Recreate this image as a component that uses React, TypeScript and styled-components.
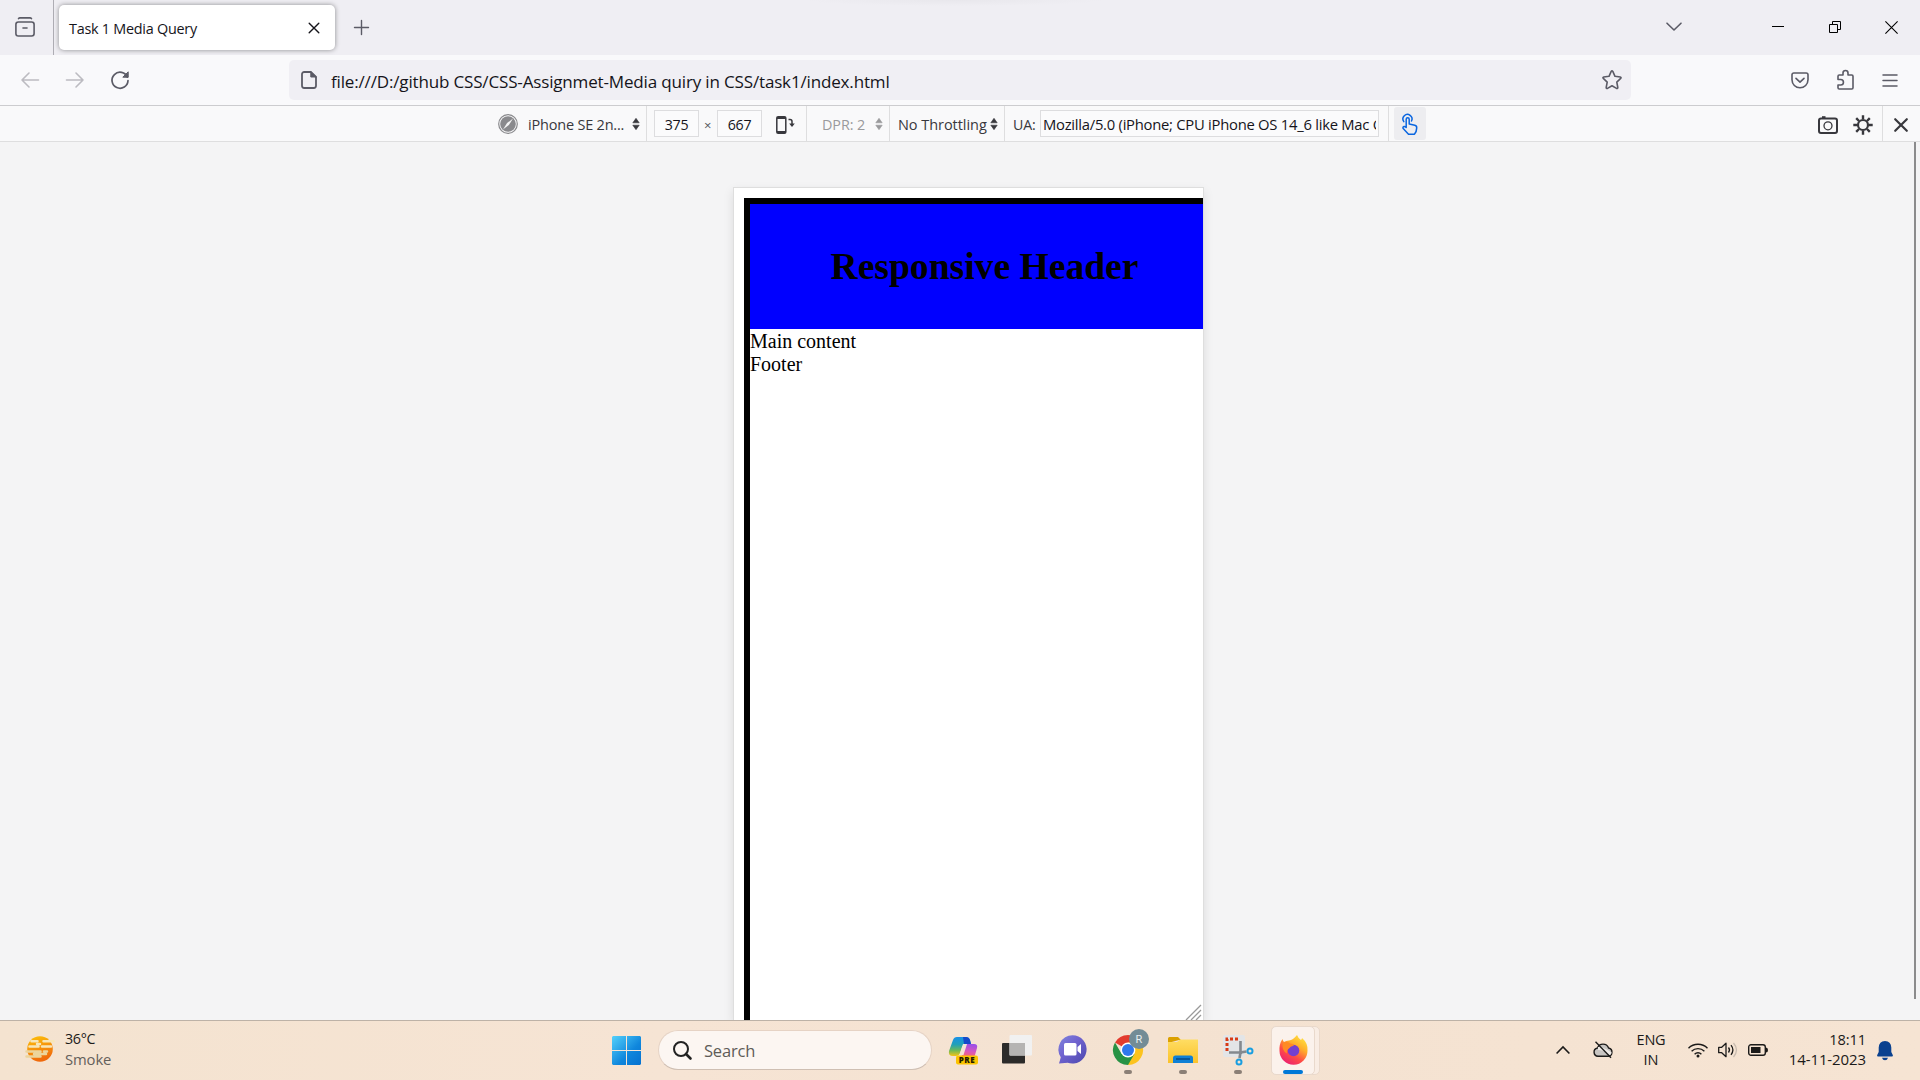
import React from "react";
import styled, { createGlobalStyle } from "styled-components";

const Global = createGlobalStyle`
  * { box-sizing: border-box; }
  html, body, #root { margin: 0; width: 1920px; height: 1080px; overflow: hidden; }
  body { font-family: "Open Sans", "Noto Sans", sans-serif; color: #15141a; }
  svg { display: block; flex: none; overflow: visible; }
`;

const Screen = styled.div`
  width: 1920px;
  height: 1080px;
  display: flex;
  flex-direction: column;
  background: #f4f4f5;
`;
const Label = styled.span<{ $size: number; $track?: number; $color?: string; $ml?: number; $w?: number; $drop?: number }>`
  font-size: ${(p) => p.$size}px;
  letter-spacing: ${(p) => p.$track ?? 0}px;
  color: ${(p) => p.$color ?? "#15141a"};
  margin-left: ${(p) => p.$ml ?? 0}px;
  padding-top: ${(p) => p.$drop ?? 0}px;
  width: ${(p) => (p.$w ? p.$w + "px" : "auto")};
  white-space: pre;
  flex: none;
`;
const Space = styled.div<{ $w?: number }>`
  flex: ${(p) => (p.$w === undefined ? "1" : `0 0 ${p.$w}px`)};
`;

const TabStrip = styled.header`
  height: 55px;
  flex: none;
  display: flex;
  align-items: center;
  background: radial-gradient(150px 6px at 955px 0, #e8e7ec, transparent), #efeef3;
`;
const FirefoxView = styled.div`
  width: 54px;
  height: 55px;
  border-right: 1px solid #aeadb4;
  padding: 17px 0 0 15px;
`;
const Tab = styled.div`
  width: 276px;
  height: 45px;
  margin: 0 19px 0 5px;
  padding: 0 15px 0 10px;
  display: flex;
  align-items: center;
  justify-content: space-between;
  background: #fff;
  border-radius: 5px;
  box-shadow: 0 0 5px rgba(0, 0, 0, 0.42);
`;
const WindowControls = styled.div`
  display: flex;
  align-items: center;
  padding: 0 22px 1px 0;
`;

const NavBar = styled.nav`
  height: 51px;
  flex: none;
  display: flex;
  align-items: center;
  background: #f9f9fb;
  border-bottom: 1px solid #cccccf;
  padding-left: 21px;
`;
const UrlBar = styled.div`
  width: 1342px;
  height: 40px;
  display: flex;
  align-items: center;
  padding: 0 9px 0 12px;
  background: #f0eff4;
  border-radius: 5px;
`;

const DeviceBar = styled.div`
  height: 36px;
  flex: none;
  display: flex;
  align-items: center;
  background: #f9f9fa;
  border-bottom: 1px solid #dededf;
  padding-left: 498px;
`;
const BarIcon = styled.svg`
  margin-top: 3px;
`;
const Divider = styled.div`
  width: 1px;
  height: 35px;
  flex: none;
  background: #dededf;
`;
const Field = styled.div<{ $w: number; $center?: boolean }>`
  width: ${(p) => p.$w}px;
  height: 27px;
  flex: none;
  display: flex;
  align-items: center;
  justify-content: ${(p) => (p.$center ? "center" : "flex-start")};
  padding: 0 2px;
  border: 1px solid #dddddf;
  background: #fbfbfc;
`;
const Clip = styled.div`
  overflow: hidden;
  display: flex;
  flex: 1;
`;
const TouchButton = styled.div`
  width: 32px;
  height: 33px;
  margin-left: 5px;
  padding-top: 2px;
  display: grid;
  place-items: center;
  border-radius: 3px;
  background: #ededf0;
`;

const Stage = styled.main`
  height: 878px;
  flex: none;
  display: flex;
  align-items: stretch;
  padding: 45px 4px 0 733px;
  overflow: hidden;
`;
const Viewport = styled.section`
  position: relative;
  width: 471px;
  border: 1px solid #dedede;
  border-bottom: 0;
  background: #fff;
  box-shadow: 0 4px 10px rgba(0, 0, 0, 0.1);
  padding: 10px 0 0 10px;
`;
const PageBody = styled.div`
  height: 823px;
  border: solid #000;
  border-width: 6px 0 0 6px;
  font-family: "Liberation Serif", serif;
  font-size: 20px;
  line-height: 23px;
  color: #000;
`;
const PageHeader = styled.div`
  height: 125px;
  background: #00f;
  padding: 0 0 0 16px;
  display: flex;
  align-items: center;
  justify-content: center;
  margin-bottom: 1px;
`;
const Title = styled.h1`
  margin: 0;
  font-size: 37.6px;
  line-height: 46px;
  font-weight: 700;
  white-space: nowrap;
`;
const Grip = styled.svg`
  position: absolute;
  right: 2px;
  bottom: 0;
`;
const ScrollThumb = styled.div`
  width: 2px;
  height: 857px;
  margin: -45px 0 0 auto;
  background: #8b8b8c;
`;

const Taskbar = styled.footer`
  height: 60px;
  flex: none;
  display: flex;
  align-items: center;
  border-top: 1px solid #bdb2a7;
  background: linear-gradient(90deg, #f4e3d0, #f6e4d4 35%, #f4e2d1 60%, #f6e4d3);
  padding-left: 25px;
`;
const Stack = styled.div<{ $ml: number; $align?: string; $w?: number; $lift?: number }>`
  margin-left: ${(p) => p.$ml}px;
  padding-bottom: ${(p) => p.$lift ?? 2}px;
  width: ${(p) => (p.$w ? p.$w + "px" : "auto")};
  display: flex;
  flex-direction: column;
  align-items: ${(p) => p.$align ?? "flex-start"};
  line-height: 20px;
`;
const SearchBox = styled.div`
  width: 274px;
  height: 40px;
  margin: 0 0 1px 17px;
  padding-left: 14px;
  display: flex;
  align-items: center;
  border: 1px solid #e6d3c5;
  border-bottom-color: #cfbfb3;
  border-radius: 20px;
  background: #fcf6f2;
`;
const AppSlot = styled.div<{ $w?: number }>`
  width: ${(p) => p.$w ?? 55}px;
  height: 59px;
  flex: none;
  display: flex;
  flex-direction: column;
  align-items: center;
  justify-content: flex-end;
  gap: 5px;
  padding-bottom: 6px;
`;
const Running = styled.div<{ $on?: boolean }>`
  width: 8px;
  height: 4px;
  border-radius: 2px;
  background: ${(p) => (p.$on ? "#8b7f76" : "transparent")};
`;
const ActiveGroup = styled.div`
  width: 49px;
  height: 49px;
  border-radius: 5px;
  background: #f9ede4;
  border: 1px solid #ead9cb;
  margin-left: 7px;
`;
const ActiveApp = styled.div`
  width: 44px;
  height: 49px;
  margin: -1px 0 0 -1px;
  padding-top: 8px;
  display: flex;
  flex-direction: column;
  align-items: center;
  justify-content: space-between;
  border-radius: 5px;
  background: #fbf2ec;
  border: 1px solid #e9d9cc;
`;
const ActiveMark = styled.div`
  width: 20px;
  height: 4px;
  border-radius: 2px;
  background: #0078d7;
`;

const line = { fill: "none", stroke: "#5b5b66", strokeWidth: 1.6, strokeLinecap: "round", strokeLinejoin: "round" } as const;

const Sorter = ({ color = "#38383d" }: { color?: string }) => (
  <svg width="8" height="12" viewBox="0 0 8 12" fill={color}>
    <path d="M4 .3 7.2 4.8H.8zM4 11.7.8 7.2h6.4z" stroke={color} strokeWidth=".6" strokeLinejoin="round" />
  </svg>
);

function Tabs() {
  return (
    <TabStrip>
      <FirefoxView>
        <svg width="20" height="20" viewBox="0 0 20 20" {...line}>
          <path d="M3.500 1.600Q4 .9 5 .9h10q1 0 1.500.7" />
          <rect x=".9" y="5" width="18.200" height="14" rx="2.500" />
          <path d="M8 11h4" />
        </svg>
      </FirefoxView>
      <Tab>
        <Label $size={14.4} $track={-0.25} $drop={1}>Task 1 Media Query</Label>
        <svg width="12" height="12" viewBox="0 0 12 12" {...line} stroke="#15141a" strokeWidth="1.400">
          <path d="M1.200 1.200l9.600 9.600M10.800 1.200l-9.600 9.600" />
        </svg>
      </Tab>
      <svg width="15" height="15" viewBox="0 0 15 15" {...line} strokeWidth="1.400">
        <path d="M7.500.5v14M.5 7.500h14" />
      </svg>
      <Space />
      <WindowControls>
        <svg width="16" height="10" viewBox="0 0 16 10" {...line}>
          <path d="M1 1.200 8 8l7-6.800" />
        </svg>
        <Space $w={90} />
        <svg width="12" height="12" viewBox="0 0 12 12" stroke="#000" fill="none">
          <path d="M0 5.500h12" />
        </svg>
        <Space $w={45} />
        <svg width="12" height="12" viewBox="0 0 12 12" stroke="#000" fill="none">
          <path d="M.5 3.500h8v8h-8zM3.500 3.500v-3h8v8h-3" />
        </svg>
        <Space $w={44} />
        <svg width="13" height="13" viewBox="0 0 13 13" stroke="#000" fill="none" strokeWidth="1.100">
          <path d="M.4.4l12.200 12.200M12.600.4.4 12.600" />
        </svg>
      </WindowControls>
    </TabStrip>
  );
}

function Navigation() {
  return (
    <NavBar>
      <svg width="18" height="16" viewBox="0 0 18 16" {...line} stroke="#bcbbc1">
        <path d="M8 1 1 8l7 7M1 8h16.500" />
      </svg>
      <Space $w={27} />
      <svg width="18" height="16" viewBox="0 0 18 16" {...line} stroke="#bcbbc1">
        <path d="M10 1l7 7-7 7M17 8H.5" />
      </svg>
      <Space $w={27} />
      <svg width="18" height="18" viewBox="0 0 18 18" {...line} strokeWidth="1.700">
        <path d="M16.400 6.200A8 8 0 1 0 17 9.500" />
        <path d="M17.200 1.200v5h-5z" fill="#5b5b66" strokeWidth="1" />
      </svg>
      <Space $w={160} />
      <UrlBar>
        <svg width="16" height="18" viewBox="0 0 16 18" {...line} strokeWidth="1.800">
          <path d="M3.200 1h6.600l5.200 5v8.800a2.200 2.200 0 0 1-2.200 2.200H3.200A2.200 2.200 0 0 1 1 14.800V3.200A2.200 2.200 0 0 1 3.200 1z" />
          <path d="M9.800 1v5H15z" fill="#5b5b66" strokeWidth="1" />
        </svg>
        <Label $size={17.05} $track={-0.17} $ml={14} $drop={2}>file:///D:/github CSS/CSS-Assignmet-Media quiry in CSS/task1/index.html</Label>
        <Space />
        <svg width="20" height="20" viewBox="0 0 20 20" {...line} strokeWidth="1.600">
          <path d="M9.200 1.400q.8-1.200 1.600 0l2.200 4.900 5.300.7q1.300.3.400 1.400l-3.900 3.700 1 5.400q0 1.400-1.300.9L10 15.800l-4.500 2.600q-1.300.5-1.300-.9l1-5.400L1.300 8.400Q.4 7.300 1.700 7L7 6.300z" />
        </svg>
      </UrlBar>
      <Space />
      <svg width="18" height="17" viewBox="0 0 18 17" {...line}>
        <path d="M2.800 1h12.400A1.800 1.800 0 0 1 17 2.800v5a8 8 0 0 1-16 0v-5A1.800 1.800 0 0 1 2.800 1z" />
        <path d="M5 6.400l4 3.800 4-3.800" />
      </svg>
      <Space $w={28} />
      <svg width="17" height="20" viewBox="0 0 17 20" {...line}>
        <path d="M1 9V6.200q0-1.200 1.200-1.200H6V3a2.500 2.500 0 0 1 5 0v2h3.800Q16 5 16 6.200v11.600q0 1.200-1.200 1.200H2.200Q1 19 1 17.800V15h2.700a2.600 2.600 0 0 0 0-5.500H1z" />
      </svg>
      <Space $w={28} />
      <svg width="16" height="13" viewBox="0 0 16 13" {...line} strokeWidth="1.500">
        <path d="M1 1h14M1 6.500h14M1 12h14" />
      </svg>
      <Space $w={22} />
    </NavBar>
  );
}

function DeviceToolbar() {
  return (
    <DeviceBar>
      <svg width="20" height="20" viewBox="0 0 20 20">
        <circle cx="10" cy="10" r="9.300" fill="#f9f9fa" stroke="#8a8a8d" strokeWidth="1.200" />
        <circle cx="10" cy="10" r="7.800" fill="#8a8a8d" />
        <path d="M15 4.500 10.900 10.900 5 15.500 9.100 9.100z" fill="#f4f4f4" />
      </svg>
      <Label $size={14.5} $track={-0.2} $ml={10} $w={104} $drop={2} $color="#38383d">iPhone SE 2n...</Label>
      <Sorter />
      <Space $w={6} />
      <Divider />
      <Space $w={7} />
      <Field $w={45} $center><Label $size={14.2} $track={-0.2} $drop={2}>375</Label></Field>
      <Label $size={13} $ml={5} $w={13} $drop={2} $color="#55555a">×</Label>
      <Field $w={45} $center><Label $size={14.2} $track={-0.2} $drop={2}>667</Label></Field>
      <Space $w={14} />
      <BarIcon width="19" height="18" viewBox="0 0 19 18" fill="none" stroke="#38383d" strokeWidth="1.500">
        <rect x=".8" y=".8" width="9" height="16.400" rx="1.300" />
        <path d="M1 2h9M1 16h9" strokeWidth="2" />
        <path d="M12.500 3.500h1.500q2 0 2 2V9" />
        <path d="M13.200 7.500h5.600L16 11z" fill="#38383d" stroke="none" />
      </BarIcon>
      <Space $w={11} />
      <Divider />
      <Label $size={14.4} $track={-0.1} $ml={15} $w={53} $drop={1} $color="#9a9a9c">DPR: 2</Label>
      <Sorter color="#9a9a9c" />
      <Space $w={6} />
      <Divider />
      <Label $size={14.5} $track={-0.05} $ml={8} $w={92} $drop={1} $color="#38383d">No Throttling</Label>
      <Sorter />
      <Space $w={6} />
      <Divider />
      <Label $size={14.2} $track={-0.2} $ml={8} $w={27} $drop={2} $color="#38383d">UA:</Label>
      <Field $w={339}>
        <Clip><Label $size={14.8} $track={-0.26} $drop={1}>Mozilla/5.0 (iPhone; CPU iPhone OS 14_6 like Mac O</Label></Clip>
      </Field>
      <Space $w={9} />
      <Divider />
      <TouchButton>
        <svg width="18" height="21" viewBox="0 0 18 21" fill="none" stroke="#0a66e0" strokeWidth="1.500" strokeLinecap="round" strokeLinejoin="round">
          <path d="M2.800 7.600A4.500 4.500 0 1 1 10.500 7" />
          <path d="M5.200 13.500V5.300a1.500 1.500 0 0 1 3 0V10l5.600 1.200q2.200.5 1.900 2.800l-.6 3.500-1.600 2.700H7.500L2.200 14.600q-.8-1.600.8-2.100 1-.2 2.200 1z" />
        </svg>
      </TouchButton>
      <Space />
      <BarIcon width="20" height="18" viewBox="0 0 20 18" fill="none" stroke="#38383d" strokeWidth="2">
        <rect x="1" y="2.500" width="18" height="14.500" rx="2" />
        <circle cx="10" cy="9.800" r="4" strokeWidth="1.300" />
        <path d="M4 1.200h3.500" />
      </BarIcon>
      <Space $w={15} />
      <BarIcon width="20" height="20" viewBox="0 0 20 20" fill="none" stroke="#38383d">
        <circle cx="10" cy="10" r="5" strokeWidth="2.200" />
        <path d="M10 .3v4M10 15.700v4M.3 10h4M15.700 10h4M3.200 3.200 6 6M14 14l2.800 2.800M3.200 16.800 6 14M14 6l2.800-2.800" strokeWidth="2.400" />
      </BarIcon>
      <Space $w={9} />
      <Divider />
      <Space $w={11} />
      <BarIcon width="14" height="14" viewBox="0 0 14 14" stroke="#38383d" strokeWidth="2.200" strokeLinecap="round">
        <path d="M1.200 1.200l11.600 11.600M12.800 1.200 1.200 12.800" />
      </BarIcon>
      <Space $w={12} />
    </DeviceBar>
  );
}

function Desktop() {
  return (
    <Taskbar>
      <svg width="30" height="29" viewBox="0 0 30 29">
        <defs>
          <linearGradient id="sun" x1="0" y1="0" x2=".3" y2="1"><stop stopColor="#fdc30a" /><stop offset="1" stopColor="#f06a0c" /></linearGradient>
        </defs>
        <circle cx="15" cy="13" r="12.800" fill="url(#sun)" />
        <g strokeWidth="2.500" strokeLinecap="round" fill="none">
          <path d="M6.500 5.300h6M18.500 5.300h10M4.500 10.500h9M12 8h3M17 10.500h9" stroke="#f7e6b8" />
          <path d="M1.500 15.500h14M19 15.500h3M1.500 20.500h14M9 18h12" stroke="#ecd49c" />
        </g>
      </svg>
      <Stack $ml={10} $lift={3}>
        <Label $size={14.3} $track={-0.3} $color="#1b1a19">36°C</Label>
        <Label $size={14.8} $track={-0.1} $color="#64605b">Smoke</Label>
      </Stack>
      <Space />
      <svg width="29" height="29" viewBox="0 0 29 29">
        <defs>
          <linearGradient id="win" x1="0" y1="0" x2="1" y2="1"><stop stopColor="#54d1fb" /><stop offset=".6" stopColor="#0f86dc" /><stop offset="1" stopColor="#0671d0" /></linearGradient>
        </defs>
        <path fill="url(#win)" d="M1 0h13v14H0V1zM15 0h13l1 1v13H15zM0 15h14v14H1l-1-1zM15 15h14v13l-1 1H15z" />
      </svg>
      <SearchBox>
        <svg width="19" height="19" viewBox="0 0 19 19" fill="none" stroke="#222" strokeWidth="2" strokeLinecap="round">
          <circle cx="8" cy="8" r="7" />
          <path d="M13 13l4.500 4.500" strokeWidth="2.600" />
        </svg>
        <Label $size={16.5} $ml={12} $track={-0.2} $drop={1} $color="#605c58">Search</Label>
      </SearchBox>
      <Space $w={4} />
      <AppSlot>
        <svg width="29" height="28" viewBox="0 0 29 28">
          <defs>
            <linearGradient id="cpa" x1=".3" y1="0" x2=".3" y2="1"><stop stopColor="#1790e8" /><stop offset=".4" stopColor="#22a0b8" /><stop offset=".7" stopColor="#6bb95a" /><stop offset="1" stopColor="#f6c414" /></linearGradient>
            <linearGradient id="cpb" x1=".5" y1="0" x2=".3" y2="1"><stop stopColor="#9b50e8" /><stop offset=".5" stopColor="#d957bd" /><stop offset="1" stopColor="#ff6b5a" /></linearGradient>
          </defs>
          <path d="M8 0h9q3 0 4 3l1 4h-5q-3 0-4 3l-2 6q-1 3-4 3H4q-5 0-4-5L4 3q1-3 4-3z" fill="url(#cpa)" />
          <path d="M14 0h3q3 0 4 3l1 4h-7z" fill="#1549c9" />
          <path d="M18 7h7q4 0 3 4l-2 7q-1 3-4 3H10q3-1 4-5l1.500-6q.8-3 2.500-3z" fill="url(#cpb)" />
          <path d="M14 7h4l-3.500 11h-4z" fill="#f4e4d6" />
          <rect x="7" y="18.500" width="22" height="9" rx="2" fill="#fcc400" />
          <text x="18" y="26" textAnchor="middle" fontFamily="Open Sans" fontWeight="800" fontSize="8" letterSpacing=".5" fill="#241c00">PRE</text>
        </svg>
        <Running />
      </AppSlot>
      <AppSlot $w={52}>
        <svg width="30" height="30" viewBox="0 0 30 30">
          <rect x="0" y="8" width="23" height="20.500" rx="1" fill="#2c2b2a" />
          <rect x="7.500" y="0" width="22.500" height="20.500" rx="1" fill="#f1f1f1" />
          <path d="M7.500 8H23v12.500H7.500z" fill="#b5b4b3" />
        </svg>
        <Running />
      </AppSlot>
      <AppSlot $w={58}>
        <svg width="29" height="30" viewBox="0 0 29 30">
          <defs>
            <linearGradient id="chat" x1="0" y1="0" x2="1" y2="1"><stop stopColor="#7f86dd" /><stop offset=".4" stopColor="#7164d0" /><stop offset="1" stopColor="#4b47ae" /></linearGradient>
          </defs>
          <path d="M14.500.2a14.200 14.200 0 1 1-4.800 27.600L1 28.600l1.800-6.400A14.200 14.200 0 0 1 14.500.2z" fill="url(#chat)" />
          <rect x="6" y="8" width="12.500" height="12.500" rx="1.600" fill="#fff" />
          <path d="M19.500 12l3.500-3v10l-3.500-3z" fill="#fff" />
        </svg>
        <Running />
      </AppSlot>
      <AppSlot $w={53}>
        <svg width="30" height="30" viewBox="0 0 30 30">
          <path d="M15 15 2 7.500A15 15 0 0 1 28 7.500z" fill="#e33b2e" />
          <path d="M15 15 15 7.500h13A15 15 0 0 1 15 30z" fill="#fcc31e" />
          <path d="M2 7.500 8.500 18.700 21.500 18.700 15 30A15 15 0 0 1 2 7.500z" fill="#289244" />
          <circle cx="15" cy="15" r="7.400" fill="#fff" />
          <circle cx="15" cy="15" r="6" fill="#3078ec" />
          <circle cx="26" cy="4" r="10" fill="#738c96" />
          <text x="26" y="8" textAnchor="middle" fontFamily="Roboto" fontSize="11" fill="#e8eef0">R</text>
        </svg>
        <Running $on />
      </AppSlot>
      <AppSlot $w={57}>
        <svg width="30" height="30" viewBox="0 0 30 30">
          <defs><linearGradient id="fold" x1="0" y1="0" x2="0" y2="1"><stop stopColor="#ffdd63" /><stop offset="1" stopColor="#fbc22a" /></linearGradient></defs>
          <path d="M0 3.500Q0 2 1.500 2h8.500L13 5h-2L0 8z" fill="#dba000" />
          <path d="M0 7h9l3-2.500h18V28H0z" fill="url(#fold)" />
          <path d="M5 28v-5q0-2.500 2.500-2.500h15Q25 20.500 25 23v5z" fill="#1080d5" />
          <path d="M8 24h14" stroke="#064a86" strokeWidth="1.500" />
        </svg>
        <Running $on />
      </AppSlot>
      <AppSlot $w={53}>
        <svg width="30" height="30" viewBox="0 0 30 30">
          <rect width="22" height="22" rx="2" fill="#e3e5e7" />
          <path d="M4 16V4h12" fill="none" stroke="#d83b16" strokeWidth="3" strokeDasharray="3 2" />
          <path d="M17.500 6v13M6 17.500h13" stroke="#84898e" strokeWidth="2.600" />
          <path d="M16.500 23l1-5.500 6-1" stroke="#84898e" strokeWidth="2.600" fill="none" />
          <circle cx="27" cy="16" r="2.500" fill="none" stroke="#1a9ee0" strokeWidth="2" />
          <circle cx="16" cy="27" r="2.500" fill="none" stroke="#1a9ee0" strokeWidth="2" />
        </svg>
        <Running $on />
      </AppSlot>
      <ActiveGroup>
        <ActiveApp>
          <svg width="29" height="29" viewBox="0 0 29 29">
            <defs>
              <linearGradient id="fx" x1=".8" y1="0" x2=".2" y2="1"><stop stopColor="#ffe640" /><stop offset=".35" stopColor="#ffad2a" /><stop offset=".65" stopColor="#ff4c45" /><stop offset="1" stopColor="#e81a78" /></linearGradient>
            </defs>
            <path d="M18 0q1 3 4 5 1-1 1-2 6 5 5.500 12.500A14 14 0 0 1 .5 16Q0 9 3.500 4q.4 2 1.500 3 2-1.500 5-1.500Q14 5 18 0z" fill="url(#fx)" />
            <circle cx="14.500" cy="15.500" r="5.800" fill="#7540cf" />
            <path d="M4 8q4-2 7 .5 3 0 4 2-4 1-5 3-3 2-2 5Q2 15 4 8z" fill="#ff8a24" />
          </svg>
          <ActiveMark />
        </ActiveApp>
      </ActiveGroup>
      <Space $w={236} />
      <svg width="14" height="10" viewBox="0 0 14 10" fill="none" stroke="#1b1a19" strokeWidth="1.600"><path d="M.6 7.500 7 1l6.400 6.500" /></svg>
      <Space $w={23} />
      <svg width="20" height="17" viewBox="0 0 20 17" fill="none" stroke="#1b1a19" strokeWidth="1.400">
        <path d="M5 14.300a4.200 4.200 0 0 1-.6-8.300A6 6 0 0 1 15.600 6a4.200 4.200 0 0 1-.6 8.300z" fill="#c8c5c2" />
        <path d="M5 6.500Q10 6 18 12" stroke="#eeeae6" strokeWidth="3" />
        <path d="M2.500-.2 18 15.700" />
      </svg>
      <Stack $ml={22} $align="center" $w={32} $lift={1}>
        <Label $size={14.5} $track={-0.2} $color="#1b1a19">ENG</Label>
        <Label $size={14.5} $track={-0.1} $color="#1b1a19">IN</Label>
      </Stack>
      <Space $w={21} />
      <svg width="20" height="17" viewBox="0 0 20 17" fill="none" stroke="#1b1a19" strokeWidth="1.400">
        <path d="M.5 6.200a13.400 13.400 0 0 1 19 0M3.600 9.300a9 9 0 0 1 12.800 0M6.600 12.200a4.800 4.800 0 0 1 6.800 0" />
        <circle cx="10" cy="14" r="1.500" fill="#1b1a19" stroke="none" />
      </svg>
      <Space $w={10} />
      <svg width="20" height="17" viewBox="0 0 20 17" fill="none" stroke="#1b1a19" strokeWidth="1.300">
        <path d="M.7 5.300h3L8 1.300v13.400l-4.300-4h-3z" strokeLinejoin="round" />
        <path d="M10.500 5.500q2 2.500 0 5M13 3.200q3.800 4.800 0 9.600" />
        <path d="M15.500 1q6 7 0 14" stroke="#c9bcb0" />
      </svg>
      <Space $w={10} />
      <svg width="20" height="13" viewBox="0 0 20 13">
        <rect x=".7" y=".7" width="16.600" height="10.600" rx="2.300" fill="none" stroke="#1b1a19" strokeWidth="1.400" />
        <rect x="3" y="3" width="9.500" height="6" fill="#1b1a19" />
        <path d="M18 3.500q2 0 2 2.500t-2 2.500z" fill="#1b1a19" />
      </svg>
      <Stack $ml={18} $align="flex-end" $w={80} $lift={4}>
        <Label $size={14.6} $track={-0.1} $color="#1b1a19">18:11</Label>
        <Label $size={15} $track={-0.1} $color="#1b1a19">14-11-2023</Label>
      </Stack>
      <Space $w={11} />
      <svg width="16" height="20" viewBox="0 0 16 20" fill="#0a418f">
        <path d="M8 0q6 .3 6.300 6.500V11l1.600 3.200q.2 1.300-1 1.300H1.100q-1.200 0-1-1.300L1.700 11V6.500Q2 .3 8 0zM5 16.800h6Q10.300 19.300 8 19.300T5 16.800z" />
      </svg>
      <Space $w={27} />
    </Taskbar>
  );
}

export default function App() {
  return (
    <Screen>
      <Global />
      <Tabs />
      <Navigation />
      <DeviceToolbar />
      <Stage>
        <Viewport>
          <PageBody>
            <PageHeader><Title>Responsive Header</Title></PageHeader>
            <div>Main content</div>
            <div>Footer</div>
          </PageBody>
          <Grip width="16" height="15" viewBox="0 0 16 15" stroke="#999" strokeWidth="1.300">
            <path d="M1 15 16 0M6 15 16 5M11 15l5-5" />
          </Grip>
        </Viewport>
        <ScrollThumb />
      </Stage>
      <Desktop />
    </Screen>
  );
}
